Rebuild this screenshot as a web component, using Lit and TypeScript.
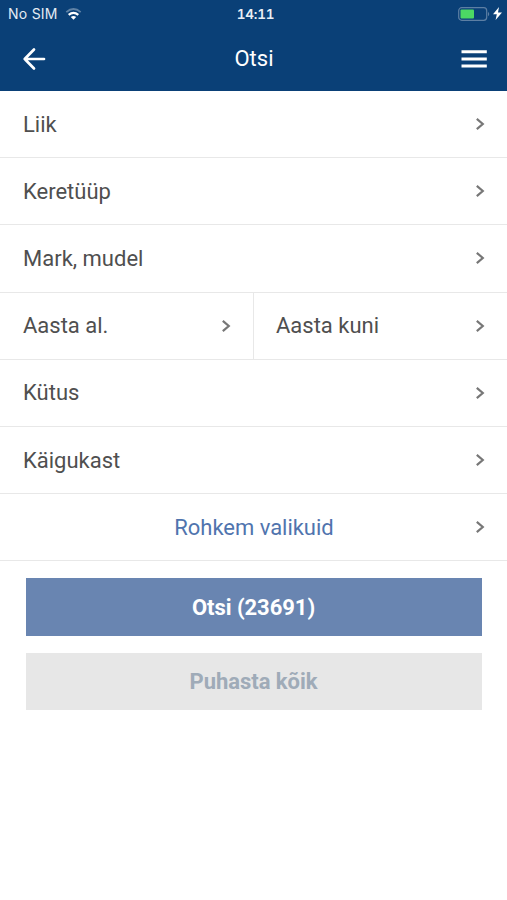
import { LitElement, html, css } from "lit";
import { customElement } from "lit/decorators.js";

const chevron = html`<svg class="chevron" width="10" height="14" viewBox="0 0 10 14"><path d="M1.8 1.8 7.8 7 1.8 12.2" fill="none" stroke="#777" stroke-width="2.2"/></svg>`;

@customElement("app-root")
export class AppRoot extends LitElement {
  static styles = css`
    :host { display: block; height: 900px; background: #fff; font-family: Roboto, sans-serif; color: #4f4f4f; overflow: hidden; }
    * { box-sizing: border-box; }
    svg { display: block; }
    header { height: 91px; background: #0a4077; color: #fff; }
    .status { height: 27px; display: grid; grid-template-columns: 1fr auto 1fr; align-items: center; padding: 0 5px 0 8px; font: 14px Inter, sans-serif; }
    .carrier { display: flex; align-items: center; gap: 7px; letter-spacing: .25px; color: #e4ebf3; }
    .clock { font-weight: 600; font-size: 13.5px; letter-spacing: -.2px; font-feature-settings: "tnum"; color: #e9eff5; margin-left: 1px; }
    .power { display: flex; justify-content: flex-end; align-items: center; gap: 3px; }
    .bar { height: 63px; display: grid; grid-template-columns: 1fr auto 1fr; align-items: center; padding: 0 20px 0 22px; }
    .title { font-size: 22px; margin-left: -1px; padding-bottom: 1px; }
    .menu { justify-self: end; }
    .row { height: 67.2px; display: flex; border-bottom: 1px solid #e8e8e8; }
    .cell { flex: 1; display: flex; align-items: center; justify-content: space-between; padding: 0 22px 0 23px; font-size: 22px; }
    .pair .cell:first-child { flex: 0 0 253px; }
    .cell + .cell { border-left: 1px solid #e8e8e8; padding-left: 22px; }
    .more .label { flex: 1; text-align: center; color: #5074ae; padding-left: 10px; letter-spacing: -.03px; }
    .actions { padding: 17px 25px 0 26px; display: grid; gap: 17px; }
    button { height: 57.5px; border: 0; padding: 0 1px 0 0; font: 700 22px Roboto, sans-serif; letter-spacing: -.04px; background: #6985b1; color: #fff; }
    .clear { background: #e7e7e7; color: #9fabb8; }
  `;

  cell(label: string) {
    return html`<div class="cell"><span class="label">${label}</span>${chevron}</div>`;
  }

  render() {
    return html`
      <header>
        <div class="status">
          <div class="carrier"><span>No SIM</span>
            <svg width="17" height="12" viewBox="0 0 16 12"><path d="M.8 4.2Q8-2.2 15.2 4.2" fill="none" stroke="#fff" stroke-opacity=".35" stroke-width="1.8"/><path d="M3.2 6.8Q8 2.8 12.8 6.8" fill="none" stroke="#fff" stroke-width="2.2"/><path d="M5.3 9Q8 7 10.7 9L8 11.7Z" fill="#fff"/></svg>
          </div>
          <span class="clock">14:11</span>
          <div class="power">
            <svg width="32" height="14" viewBox="0 0 32 14"><rect x=".7" y=".7" width="28" height="12.6" rx="3" fill="none" stroke="#5d7fa4" stroke-width="1.2"/><rect x="2.5" y="2.5" width="13.5" height="9" rx="1" fill="#4cd964"/><path d="M30 4.7q2.5 2.3 0 4.6Z" fill="#5d7fa4"/></svg>
            <svg width="9" height="13" viewBox="0 0 9 13"><path d="M6 0 0 7.2h3.8L2.6 13 9 5.6H5Z" fill="#fff"/></svg>
          </div>
        </div>
        <div class="bar">
          <svg width="24" height="24" viewBox="0 0 24 24"><path d="M22 12H2.7M12 2.5 2.7 12l9.3 9.5" fill="none" stroke="#fff" stroke-width="2.7" stroke-linecap="round" stroke-linejoin="round"/></svg>
          <span class="title">Otsi</span>
          <svg class="menu" width="26" height="18" viewBox="0 0 26 18"><path d="M.5 1.8h25.3M.5 9h25.3M.5 16h25.3" stroke="#fff" stroke-width="3"/></svg>
        </div>
      </header>
      ${["Liik", "Keretüüp", "Mark, mudel"].map((l) => html`<div class="row">${this.cell(l)}</div>`)}
      <div class="row pair">${this.cell("Aasta al.")}${this.cell("Aasta kuni")}</div>
      ${["Kütus", "Käigukast"].map((l) => html`<div class="row">${this.cell(l)}</div>`)}
      <div class="row more">${this.cell("Rohkem valikuid")}</div>
      <div class="actions"><button>Otsi (23691)</button><button class="clear">Puhasta kõik</button></div>
    `;
  }
}
